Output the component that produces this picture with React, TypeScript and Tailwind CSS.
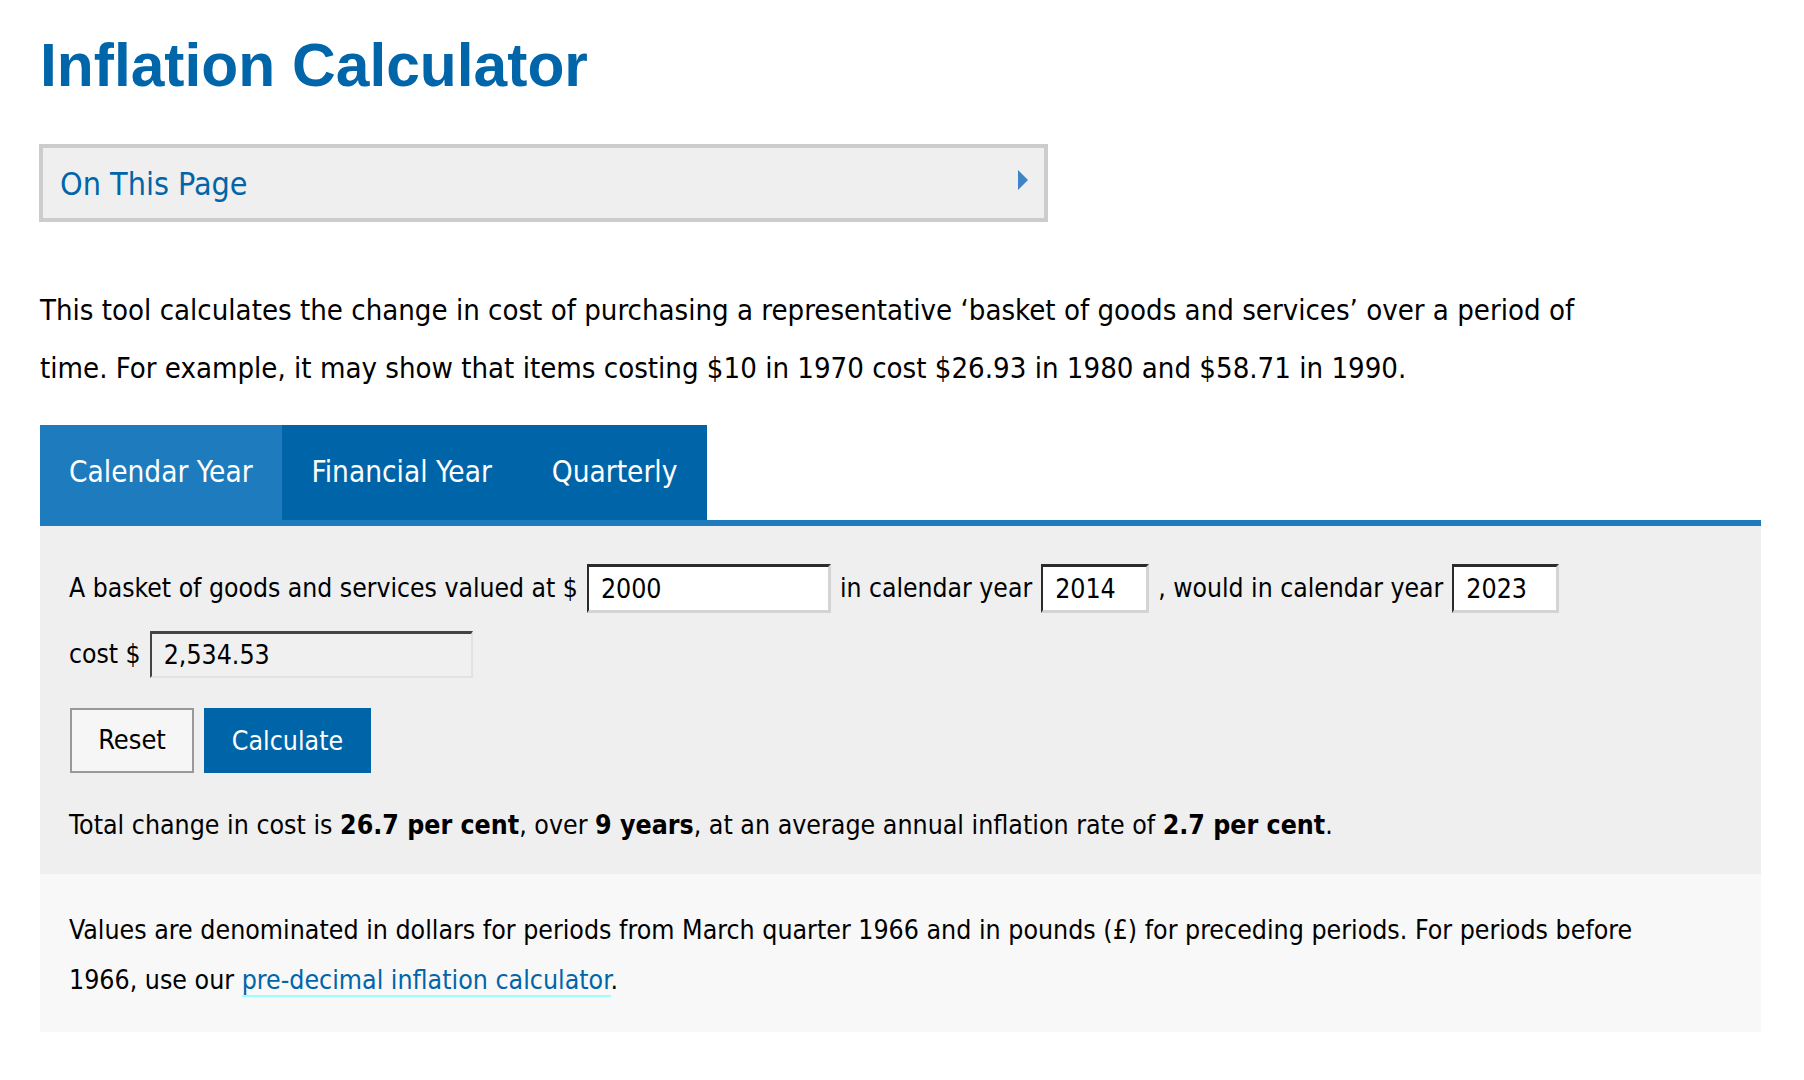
import React from "react";

const F = "font-['DejaVu_Sans_Condensed','DejaVu_Sans',sans-serif] [font-stretch:condensed]";

function Field({ value, w, readOnly }: { value: string; w: string; readOnly?: boolean }) {
  return (
    <div
      className={`${w} ${readOnly ? "h-[47px] bg-[#f0f0f0] border-t-[3px] border-l-[2px] border-t-[#444] border-l-[#444] border-r-[2px] border-b-[2px] border-r-[#e2e2e2] border-b-[#e2e2e2]" : "h-[49px] bg-white border-t-[3px] border-l-[2px] border-t-[#2b2b2b] border-l-[#2b2b2b] border-r-[3px] border-b-[3px] border-r-[#d4d4d4] border-b-[#d4d4d4]"} flex items-center pl-[12px] text-[26.5px] text-black`}
    >
      {value}
    </div>
  );
}

export default function App() {
  return (
    <div className={`min-h-[1080px] bg-white pl-[40px] pr-[43px] pt-[35px] ${F} text-black`}>
      <h1 className="font-['Liberation_Sans',Arial,sans-serif] [font-stretch:normal] text-[60.5px] leading-[60px] font-bold text-[#0065a9]">
        Inflation Calculator
      </h1>

      <div className="mt-[49px] -ml-[1px] w-[1009px] h-[78px] border-4 border-[#cccccc] bg-[#efefef] flex items-center justify-between pl-[17px] pr-[16px]">
        <span className="text-[32px] text-[#0065a9] mt-[2px]">On This Page</span>
        <svg width="10" height="20" viewBox="0 0 10 20" className="-mt-[6px]">
          <polygon points="0,0 10,10 0,20" fill="#3d85c6" />
        </svg>
      </div>

      <p className="mt-[60px] w-[1600px] text-[29.1px] leading-[57.5px]">
        This tool calculates the change in cost of purchasing a representative ‘basket of goods and services’ over a period of time. For example, it may show that items costing $10 in 1970 cost $26.93 in 1980 and $58.71 in 1990.
      </p>

      <div className="mt-[28px] flex h-[95px] text-[29.5px] text-white">
        <div className="bg-[#1e7bbd] px-[29px] flex items-center">Calendar Year</div>
        <div className="bg-[#0065a8] px-[30px] flex items-center">Financial Year</div>
        <div className="bg-[#0065a8] px-[30px] flex items-center">Quarterly</div>
      </div>
      <div className="h-[6px] bg-[#1e7bbd]" />

      <div className="bg-[#efefef] pl-[29px] pr-[29px] pt-[38px] pb-[29px] text-[26.3px]">
        <div className="flex items-center gap-[9px] h-[49px]">
          <span>A basket of goods and services valued at $</span>
          <Field value="2000" w="w-[244px]" />
          <span>in calendar year</span>
          <Field value="2014" w="w-[108px]" />
          <span>, would in calendar year</span>
          <Field value="2023" w="w-[107px]" />
        </div>
        <div className="mt-[18px] flex items-center gap-[9px] h-[47px]">
          <span>cost $</span>
          <Field value="2,534.53" w="w-[323px]" readOnly />
        </div>
        <div className="mt-[30px] flex gap-[10px] ml-[1px]">
          <button className="w-[124px] h-[65px] bg-[#f6f6f6] border-2 border-[#999999] text-[27px] text-black flex items-center justify-center">
            Reset
          </button>
          <button className="w-[167px] h-[65px] bg-[#0065a8] text-[26.5px] text-white flex items-center justify-center">
            Calculate
          </button>
        </div>
        <p className="mt-[32px] leading-[40px] text-[26.5px]">
          Total change in cost is <b>26.7 per cent</b>, over <b>9 years</b>, at an average annual inflation rate of <b>2.7 per cent</b>.
        </p>
      </div>

      <div className="bg-[#f8f8f8] pl-[29px] pr-[29px] pt-[31px] pb-[27px] text-[26.5px] leading-[50px]">
        <p className="w-[1600px]">
          Values are denominated in dollars for periods from March quarter 1966 and in pounds (£) for preceding periods. For periods before 1966, use our{" "}
          <a className="text-[#0065a9] border-b-2 border-[#99ffff]" href="#">
            pre-decimal inflation calculator
          </a>
          .
        </p>
      </div>
    </div>
  );
}
